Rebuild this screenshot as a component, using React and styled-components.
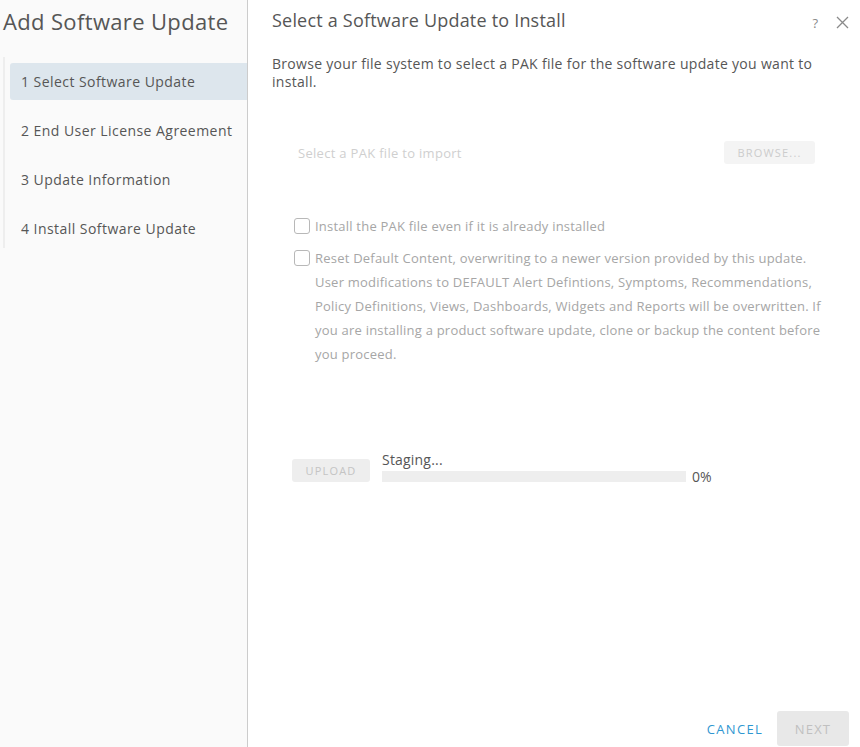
import React from 'react';
import styled, { createGlobalStyle } from 'styled-components';

const GlobalStyle = createGlobalStyle`
  html, body {
    margin: 0;
    padding: 0;
    background: #ffffff;
    font-family: "Open Sans", "Noto Sans", sans-serif;
  }
`;

const Wizard = styled.div`
  display: flex;
  width: 860px;
  height: 747px;
  overflow: hidden;
`;

const Sidebar = styled.aside`
  flex-shrink: 0;
  width: 248px;
  background: #fafafa;
  border-right: 1px solid #cccccc;
  box-sizing: border-box;
`;

const WizardTitle = styled.h1`
  margin: 0;
  padding: 7px 0 0 3px;
  font-size: 22px;
  font-weight: 400;
  letter-spacing: 0.35px;
  color: #565656;
  line-height: 28px;
  white-space: nowrap;
`;

const StepList = styled.ul`
  list-style: none;
  margin: 22px 0 0 3px;
  padding: 6px 0 0 5px;
  border-left: 2px solid #eeeeee;
  height: 191px;
  box-sizing: border-box;
`;

const Step = styled.li`
  height: 37px;
  margin-bottom: 12px;
  padding-left: 11px;
  display: flex;
  align-items: center;
  font-size: 14px;
  letter-spacing: 0.45px;
  color: #565656;
  border-radius: 3px 0 0 3px;
  background: ${(p) => (p.$active ? '#dde6ed' : 'transparent')};
  white-space: nowrap;
`;

const Main = styled.main`
  flex: 1;
  display: flex;
  flex-direction: column;
  padding: 0 11px 0 24px;
`;

const Header = styled.header`
  display: flex;
  align-items: center;
  height: 40px;
`;

const PageTitle = styled.h2`
  flex: 1;
  margin: 0;
  font-size: 18px;
  font-weight: 400;
  letter-spacing: 0.2px;
  color: #565656;
`;

const HeaderIcons = styled.div`
  display: flex;
  align-items: center;
  gap: 18px;
  margin: 5px 0 0;
  color: #8a8a8a;
  font-size: 13px;
`;

const Description = styled.p`
  margin: 15px 0 0;
  font-size: 14px;
  letter-spacing: 0.3px;
  line-height: 18px;
  color: #565656;
  padding-right: 20px;
`;

const FileRow = styled.div`
  display: flex;
  align-items: center;
  justify-content: space-between;
  margin: 50px 34px 0 26px;
`;

const Placeholder = styled.span`
  font-size: 13px;
  letter-spacing: 0.3px;
  color: #cfcfcf;
`;

const GhostButton = styled.button`
  border: none;
  border-radius: 3px;
  background: ${(p) => p.$bg || '#f4f4f4'};
  color: ${(p) => p.$fg || '#cccccc'};
  font-family: inherit;
  font-size: ${(p) => p.$size || '11px'};
  letter-spacing: 1.2px;
  text-transform: uppercase;
  width: ${(p) => p.$w};
  height: ${(p) => p.$h};
  padding: 0;
`;

const Options = styled.div`
  margin: 50px 0 0 22px;
  display: flex;
  flex-direction: column;
  gap: 8px;
`;

const Option = styled.label`
  display: flex;
  align-items: flex-start;
  gap: 5px;
  font-size: 13px;
  letter-spacing: 0.22px;
  line-height: 24px;
  color: #a6a6a6;
  padding-right: 23px;
`;

const Box = styled.span`
  flex-shrink: 0;
  width: 14px;
  height: 14px;
  margin-top: 4px;
  border: 1px solid #b8b8b8;
  border-radius: 3px;
  background: #ffffff;
`;

const UploadRow = styled.div`
  display: flex;
  align-items: flex-end;
  gap: 12px;
  margin: 85px 0 0 20px;
`;

const Progress = styled.div`
  display: flex;
  flex-direction: column;
`;

const Staging = styled.div`
  font-size: 14px;
  letter-spacing: 0.2px;
  color: #565656;
  line-height: 18px;
  margin-bottom: 2px;
`;

const BarRow = styled.div`
  display: flex;
  align-items: center;
  gap: 6px;
`;

const Track = styled.div`
  width: 304px;
  height: 11px;
  background: #eeeeee;
`;

const Percent = styled.span`
  font-size: 14px;
  color: #565656;
  line-height: 11px;
`;

const Footer = styled.footer`
  margin-top: auto;
  display: flex;
  justify-content: flex-end;
  align-items: center;
  gap: 14px;
  padding-bottom: 1px;
`;

const LinkButton = styled.button`
  border: none;
  background: none;
  color: #2f97d1;
  font-family: inherit;
  font-size: 13px;
  letter-spacing: 1.3px;
  padding: 0;
`;

export default function App() {
  const steps = [
    '1 Select Software Update',
    '2 End User License Agreement',
    '3 Update Information',
    '4 Install Software Update',
  ];
  return (
    <>
      <GlobalStyle />
      <Wizard>
        <Sidebar>
          <WizardTitle>Add Software Update</WizardTitle>
          <StepList>
            {steps.map((s, i) => (
              <Step key={s} $active={i === 0}>
                {s}
              </Step>
            ))}
          </StepList>
        </Sidebar>
        <Main>
          <Header>
            <PageTitle>Select a Software Update to Install</PageTitle>
            <HeaderIcons>
              <span>?</span>
              <svg width="13" height="13" viewBox="0 0 13 13">
                <path d="M1 1 L12 12 M12 1 L1 12" stroke="#8a8a8a" strokeWidth="1.3" />
              </svg>
            </HeaderIcons>
          </Header>
          <Description>
            Browse your file system to select a PAK file for the software update you want to install.
          </Description>
          <FileRow>
            <Placeholder>Select a PAK file to import</Placeholder>
            <GhostButton $w="91px" $h="23px">Browse...</GhostButton>
          </FileRow>
          <Options>
            <Option>
              <Box />
              Install the PAK file even if it is already installed
            </Option>
            <Option>
              <Box />
              <span>
                Reset Default Content, overwriting to a newer version provided by this update. User
                modifications to DEFAULT Alert Defintions, Symptoms, Recommendations, Policy
                Definitions, Views, Dashboards, Widgets and Reports will be overwritten. If you are
                installing a product software update, clone or backup the content before you proceed.
              </span>
            </Option>
          </Options>
          <UploadRow>
            <GhostButton $w="78px" $h="23px" $bg="#eeeeee" $fg="#c4c4c4">Upload</GhostButton>
            <Progress>
              <Staging>Staging...</Staging>
              <BarRow>
                <Track />
                <Percent>0%</Percent>
              </BarRow>
            </Progress>
          </UploadRow>
          <Footer>
            <LinkButton>CANCEL</LinkButton>
            <GhostButton $w="72px" $h="35px" $bg="#e8e8e8" $fg="#c0c0c0" $size="13px">
              Next
            </GhostButton>
          </Footer>
        </Main>
      </Wizard>
    </>
  );
}
